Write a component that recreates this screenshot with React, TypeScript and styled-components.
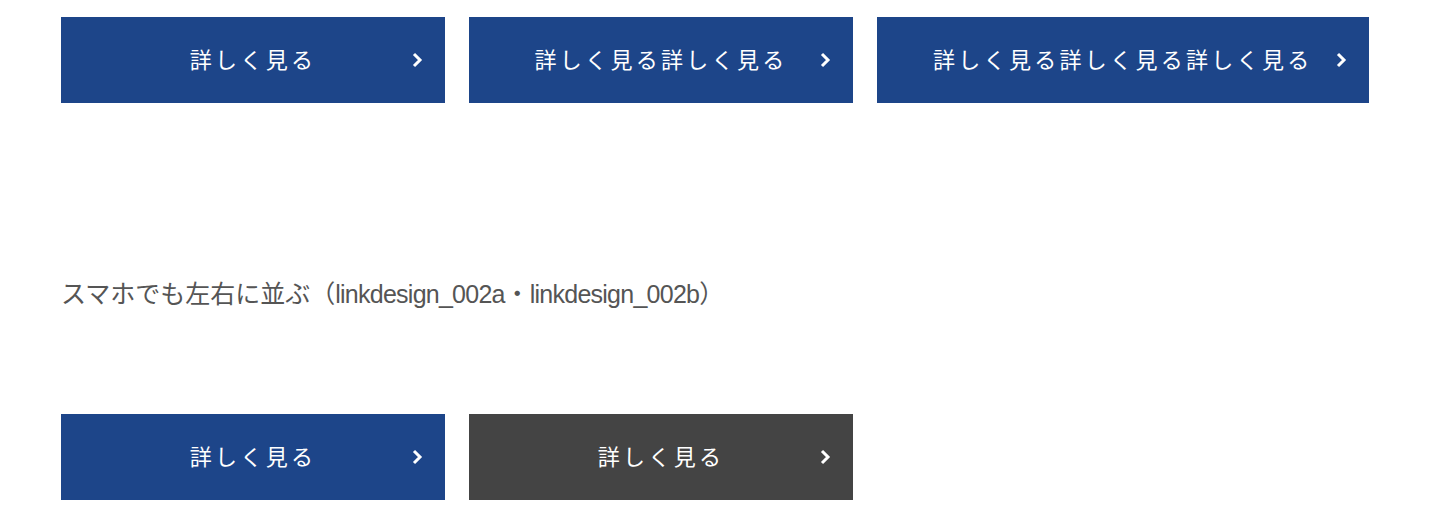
import { type FC } from "react";
import styled, { createGlobalStyle } from "styled-components";

const GlobalStyle = createGlobalStyle`
  body {
    margin: 0;
    background: #fff;
    font-family: "Liberation Sans", "Noto Sans CJK JP", sans-serif;
  }
`;

const Page = styled.div`
  padding: 17px 61px 0;
`;

const ButtonRow = styled.div`
  display: flex;
  gap: 24px;
`;

const Caption = styled.p`
  margin: 173px 0 102px;
  font-size: 25px;
  line-height: 36px;
  color: #555;
  font-family: "Liberation Sans", "Noto Sans CJK JP", sans-serif;
`;

const Code = styled.span`
  letter-spacing: -0.03em;
`;

const LinkButton = styled.a<{ $dark?: boolean }>`
  position: relative;
  display: flex;
  align-items: center;
  justify-content: center;
  box-sizing: border-box;
  min-width: 384px;
  height: 86px;
  padding: 0 56px 5px;
  background: ${(p) => (p.$dark ? "#444444" : "#1d4589")};
  color: #fff;
  text-decoration: none;
  font-family: "Noto Sans CJK JP", sans-serif;
  font-size: 22px;
  letter-spacing: 0.15em;
  white-space: nowrap;
`;

const Arrow = styled.svg`
  position: absolute;
  right: 22px;
  top: 50%;
  width: 12px;
  height: 16px;
  margin-top: -8px;
`;

const Button: FC<{ label: string; dark?: boolean }> = ({ label, dark }) => (
  <LinkButton href="#" $dark={dark}>
    {label}
    <Arrow viewBox="0 0 12 16">
      <polyline
        points="3,2 9,8 3,14"
        fill="none"
        stroke="#fff"
        strokeWidth="3"
      />
    </Arrow>
  </LinkButton>
);

const App: FC = () => (
  <Page>
    <GlobalStyle />
    <ButtonRow>
      <Button label="詳しく見る" />
      <Button label="詳しく見る詳しく見る" />
      <Button label="詳しく見る詳しく見る詳しく見る" />
    </ButtonRow>
    <Caption>
      スマホでも左右に並ぶ（<Code>linkdesign_002a</Code>・
      <Code>linkdesign_002b</Code>）
    </Caption>
    <ButtonRow>
      <Button label="詳しく見る" />
      <Button label="詳しく見る" dark />
    </ButtonRow>
  </Page>
);

export default App;
